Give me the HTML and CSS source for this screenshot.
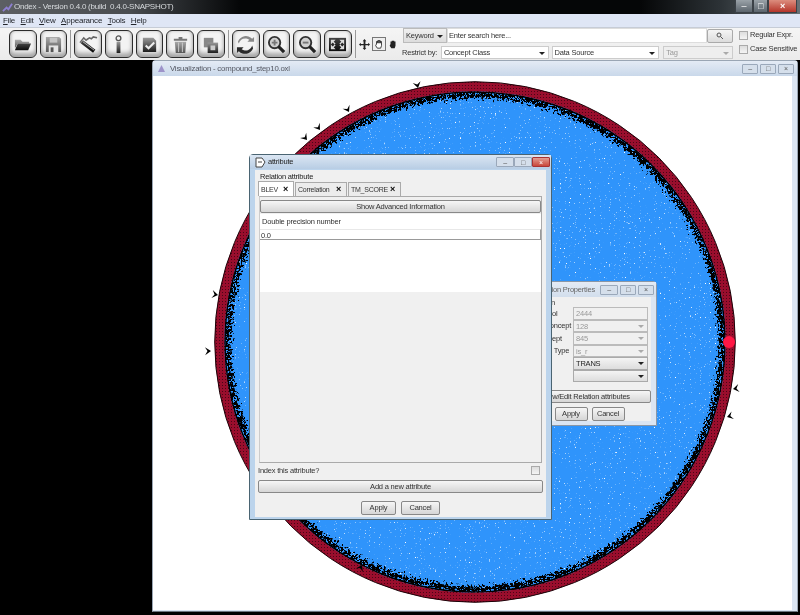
FILE: index.html
```html
<!DOCTYPE html>
<html lang="en">
<head>
<meta charset="utf-8">
<title>Ondex</title>
<link rel="stylesheet" href="styles.css">
</head>
<body>
<div class="app">
  <header class="titlebar">
    <svg class="app-icon" width="11" height="11" viewBox="0 0 12 12"><path d="M1 10 L5 6 L7 8 L11 2" fill="none" stroke="#8d7fd0" stroke-width="2"/></svg>
    <span class="title-text">Ondex - Version 0.4.0 (build  0.4.0-SNAPSHOT)</span>
    <div class="win-btns">
      <span class="win-btn">&#8211;</span><span class="win-btn win-max">&#9633;</span><span class="win-btn win-close">&#215;</span>
    </div>
  </header>
  <nav class="menubar">
    <span><u>F</u>ile</span><span><u>E</u>dit</span><span><u>V</u>iew</span><span><u>A</u>ppearance</span><span><u>T</u>ools</span><span><u>H</u>elp</span>
  </nav>
  <div class="toolbar">
    <div class="tools">
      <svg class="defs" width="0" height="0"><defs>
        <linearGradient id="ig" x1="0" y1="0" x2="0" y2="1"><stop offset="0" stop-color="#9a9a9a"/><stop offset="1" stop-color="#1c1c1c"/></linearGradient>
        <linearGradient id="ik" x1="0" y1="0" x2="0" y2="1"><stop offset="0" stop-color="#444"/><stop offset="1" stop-color="#0c0c0c"/></linearGradient>
        <linearGradient id="il" x1="0" y1="0" x2="0" y2="1"><stop offset="0" stop-color="#aaa"/><stop offset="1" stop-color="#555"/></linearGradient>
      </defs></svg>
      <button class="tool"><svg viewBox="0 0 20 20"><path d="M2 5h6l2 2h7v2H5L2 14z" fill="url(#il)"/><path d="M5 9h14l-3 7H2z" fill="url(#ik)"/></svg></button>
      <button class="tool"><svg viewBox="0 0 20 20"><path d="M2 2h14l2 2v14H2z" fill="url(#il)"/><path d="M6 3h8v5H6z" fill="#c4c4c4"/><path d="M5 11h10v7H5z" fill="#e4e4e4"/><path d="M7 13h3v5H7z" fill="#555"/></svg></button>
      <i class="sep"></i>
      <button class="tool"><svg viewBox="0 0 20 20"><path d="M3 7l13 10" stroke="url(#ik)" stroke-width="4"/><path d="M1 8l4-5 3 3M8 5l3-2 2 1 2-2 4 1" stroke="#666" stroke-width="1.600" fill="none"/><path d="M4 7l12 9" stroke="#ddd" stroke-width=".8"/></svg></button>
      <button class="tool"><svg viewBox="0 0 20 20"><circle cx="10" cy="3.500" r="2.500" fill="none" stroke="#555" stroke-width="1.400"/><path d="M8 7h4v12H8z" fill="url(#ig)"/></svg></button>
      <button class="tool"><svg viewBox="0 0 20 20"><path d="M3 3h11l3 3v12H3z" fill="url(#ig)"/><path d="M6 11l3 3 6-6" stroke="#eee" stroke-width="2.200" fill="none"/></svg></button>
      <button class="tool"><svg viewBox="0 0 20 20"><path d="M3 4h14v2H3zM8 2h4v2H8z" fill="#777"/><path d="M4 7h12l-1 12H5z" fill="url(#il)"/><path d="M8 8v10M12 8v10" stroke="#ccc"/></svg></button>
      <button class="tool"><svg viewBox="0 0 20 20"><path d="M3 3h10v10H3z" fill="#888"/><path d="M7 8h11v11H7z" fill="url(#ig)"/><path d="M10 11h5v5h-5z" fill="#ccc"/></svg></button>
      <i class="sep"></i>
      <button class="tool"><svg viewBox="0 0 20 20"><path d="M3 9a7 7 0 0 1 11-4l-2 2 7 0V2l-2 2A9 9 0 0 0 2 7z" fill="#888"/><path d="M17 11a7 7 0 0 1-11 4l2-2H1v6l2-2a9 9 0 0 0 15-3z" fill="#2a2a2a"/></svg></button>
      <button class="tool"><svg viewBox="0 0 20 20"><circle cx="8" cy="8" r="6" fill="#d0d0d0" stroke="#333" stroke-width="2"/><path d="M5 8h6M8 5v6" stroke="#777" stroke-width="2"/><path d="M12 12l6 6" stroke="#222" stroke-width="3.400"/></svg></button>
      <button class="tool"><svg viewBox="0 0 20 20"><circle cx="8" cy="8" r="6" fill="#d0d0d0" stroke="#333" stroke-width="2"/><path d="M5 8h6" stroke="#777" stroke-width="2"/><path d="M12 12l6 6" stroke="#222" stroke-width="3.400"/></svg></button>
      <button class="tool"><svg viewBox="0 0 20 20"><path d="M1 3h18v14H1z" fill="url(#ik)"/><path d="M3 5h5l-2 2 2 2-1 1-2-2-2 2zM17 5h-5l2 2-2 2 1 1 2-2 2 2zM3 15h5l-2-2 2-2-1-1-2 2-2-2zM17 15h-5l2-2-2-2 1-1 2 2 2-2z" fill="#ddd"/></svg></button>
      <i class="sep"></i>
      <div class="modes">
        <svg class="mode-move" viewBox="0 0 12 12"><path d="M6 0l2 2.400H7v3h3V4.200L12 6l-2 1.800V6.800H7v3h1L6 12 4 9.800h1v-3H2V8L0 6l2-1.800v1.300h3v-3H4z" fill="#222"/></svg>
        <span class="mode-on"><svg viewBox="0 0 12 12"><path d="M3 6V3h1.500v2V2h1.500v3V2h1.500v3V3H9v5l-1 3H4L2 8z" fill="#fff" stroke="#222"/></svg></span>
        <svg class="mode-hand" viewBox="0 0 12 12"><path d="M3 6V3h1.500v2V2h1.500v3V2h1.500v3V3H9v5l-1 3H4L2 8z" fill="#222"/></svg>
      </div>
    </div>
    <div class="search">
      <div class="search-row">
        <span class="drop keyword">Keyword<i class="arrow"></i></span>
        <span class="field query">Enter search here...</span>
        <button class="go"><svg width="8" height="8" viewBox="0 0 8 8"><circle cx="3" cy="3" r="2" fill="none" stroke="#555"/><path d="M4.500 4.500L7 7" stroke="#555"/></svg></button>
      </div>
      <div class="search-row">
        <span class="restrict">Restrict by:</span>
        <span class="drop concept">Concept Class<i class="arrow"></i></span>
        <span class="drop source">Data Source<i class="arrow"></i></span>
        <span class="drop tag">Tag<i class="arrow dim"></i></span>
      </div>
    </div>
    <div class="checks">
      <label class="check"><i class="box"></i>Regular Expr.</label>
      <label class="check"><i class="box"></i>Case Sensitive</label>
    </div>
  </div>
  <main class="desktop">
    <section class="viz">
      <div class="viz-title">
        <svg width="9" height="9" viewBox="0 0 9 9"><path d="M4.500 1L8 8H1z" fill="#9d93c9"/></svg>
        <span>Visualization - compound_step10.oxl</span>
        <div class="frame-btns"><span class="frame-btn">&#8211;</span><span class="frame-btn">&#9633;</span><span class="frame-btn">&#215;</span></div>
      </div>
      <div class="canvas">
        <svg class="graph" width="639" height="534" viewBox="0 0 639 534">
          <defs>
            <filter id="fuzz" x="-5%" y="-5%" width="110%" height="110%">
              <feTurbulence type="fractalNoise" baseFrequency="0.45" numOctaves="2" seed="4"/>
              <feDisplacementMap in="SourceGraphic" scale="16" xChannelSelector="R" yChannelSelector="G"/>
            </filter>
            <filter id="speck" x="0" y="0" width="100%" height="100%">
              <feTurbulence type="fractalNoise" baseFrequency="0.8" numOctaves="1" seed="9"/>
              <feColorMatrix values="0 0 0 0 1  0 0 0 0 1  0 0 0 0 1  9 0 0 0 -6.050"/>
            </filter>
            <clipPath id="disc"><circle cx="322" cy="266" r="252"/></clipPath>
            <pattern id="hatch" width="3" height="3" patternUnits="userSpaceOnUse">
              <rect width="3" height="3" fill="#9a0e2d"/>
              <rect width="1" height="1" fill="#4a0616"/>
            </pattern>
            <path id="mark" d="M0 0l-4-6 4 2.500 4-2.500z"/>
          </defs>
          <circle cx="322" cy="266" r="252" fill="#2f94fb"/>
          <rect x="70" y="14" width="504" height="504" filter="url(#speck)" clip-path="url(#disc)"/>
          <circle cx="322" cy="266" r="247" fill="none" stroke="#000" stroke-width="5" filter="url(#fuzz)"/>
          <circle cx="322" cy="266" r="250" fill="none" stroke="#000" stroke-width="1.500"/>
          <circle cx="322" cy="266" r="255.500" fill="none" stroke="url(#hatch)" stroke-width="9.500"/>
          <circle cx="322" cy="266" r="260.300" fill="none" stroke="#1a0207" stroke-width="1"/>
          <g fill="#000">
            <use href="#mark" transform="translate(196 36) rotate(-29)"/>
            <use href="#mark" transform="translate(167 54) rotate(-36)"/>
            <use href="#mark" transform="translate(154 64) rotate(-40)"/>
            <use href="#mark" transform="translate(265 12) rotate(-13)"/>
            <use href="#mark" transform="translate(65 219) rotate(-80)"/>
            <use href="#mark" transform="translate(58 275) rotate(-92)"/>
            <use href="#mark" transform="translate(580 313) rotate(80)"/>
            <use href="#mark" transform="translate(574 341) rotate(73)"/>
            <use href="#mark" transform="translate(403 498) rotate(161)"/>
            <use href="#mark" transform="translate(352 507) rotate(173)"/>
            <use href="#mark" transform="translate(209 489) rotate(-153)"/>
          </g>
          <circle cx="576" cy="266" r="6" fill="#ff1744"/>
        </svg>
      </div>
    </section>

    <section class="dialog props">
      <div class="dlg-title props-title">
        <span class="dlg-name">Relation Properties</span>
        <div class="frame-btns"><span class="frame-btn wide-btn">&#8211;</span><span class="frame-btn">&#9633;</span><span class="frame-btn">&#215;</span></div>
      </div>
      <div class="props-body">
        <div class="props-group">Relation</div>
        <div class="prop-row"><span>Id Symbol</span><span class="prop-val">2444</span></div>
        <div class="prop-row"><span>From Concept</span><span class="prop-val">128<i class="arrow dim"></i></span></div>
        <div class="prop-row"><span>To Concept</span><span class="prop-val">845<i class="arrow dim"></i></span></div>
        <div class="prop-row"><span>Relation Type</span><span class="prop-val">is_r<i class="arrow dim"></i></span></div>
        <div class="prop-row"><span>Attribute</span><span class="prop-val active">TRANS<i class="arrow"></i></span></div>
        <div class="prop-row"><span></span><span class="prop-val active">&nbsp;<i class="arrow"></i></span></div>
        <button class="btn wide props-wide">View/Edit Relation attributes</button>
        <div class="actions"><button class="btn act">Apply</button><button class="btn act">Cancel</button></div>
      </div>
    </section>

    <section class="dialog attr">
      <div class="dlg-title">
        <svg width="11" height="11" viewBox="0 0 11 11"><path d="M1 1h6l3 4-3 5H1z" fill="#fff" stroke="#444"/><path d="M3 5h4" stroke="#444"/></svg>
        <span class="dlg-name">attribute</span>
        <div class="win-mini"><span class="frame-btn wide-btn">&#8211;</span><span class="frame-btn wide-btn">&#9633;</span><span class="frame-btn wide-btn close">&#215;</span></div>
      </div>
      <div class="attr-body">
        <div class="group-label">Relation attribute</div>
        <div class="tabs">
          <span class="tab on">BLEV<b>&#215;</b></span>
          <span class="tab">Correlation<b>&#215;</b></span>
          <span class="tab">TM_SCORE<b>&#215;</b></span>
        </div>
        <div class="tab-panel">
          <button class="btn wide adv">Show Advanced Information</button>
          <div class="table">
            <div class="thead">Double precision number</div>
            <div class="tcell">0.0</div>
            <div class="tfill"></div>
            <div class="tempty"></div>
          </div>
        </div>
        <div class="index-row"><span>Index this attribute?</span><i class="box"></i></div>
        <button class="btn wide add">Add a new attribute</button>
        <div class="actions"><button class="btn act">Apply</button><button class="btn act">Cancel</button></div>
      </div>
    </section>
  </main>
</div>
</body>
</html>
```
FILE: styles.css
```css
* { box-sizing: border-box; }
html, body { margin: 0; padding: 0; }
body { width: 800px; height: 615px; overflow: hidden; background: #000; font: 7.500px/1 "Liberation Sans", Arial, sans-serif; letter-spacing: -0.2px; color: #222; }
.app { width: 800px; height: 615px; display: flex; flex-direction: column; filter: blur(0.35px); }
button { font: inherit; letter-spacing: inherit; color: inherit; padding: 0; }

.titlebar { height: 14px; flex: none; display: flex; align-items: center; padding-left: 2px; gap: 1px; background: linear-gradient(90deg, #5c5f63 0, #4a4d50 130px, #2a2d30 175px, #050607 240px, #050607 640px, #2c3236 720px, #6a7276 800px); color: #d8dbde; font-size: 8px; letter-spacing: -0.25px; }
.app-icon { flex: none; }
.title-text { white-space: pre; }
.win-btns { margin-left: auto; margin-right: 3px; display: flex; height: 13px; align-self: flex-start; }
.win-btn { width: 18px; display: flex; align-items: center; justify-content: center; color: #fff; font-size: 9px; background: linear-gradient(#9aa2a8, #5c656d); border: 1px solid #3b4147; border-top: 0; }
.win-max { width: 15px; }
.win-close { width: 29px; background: linear-gradient(#dc8d7e, #b5352a); font-weight: bold; }

.menubar { height: 13px; flex: none; display: flex; align-items: center; gap: 5.500px; padding-left: 3px; background: #dfe6f5; font-size: 8px; color: #23262c; }
.toolbar { height: 33px; flex: none; display: flex; background: linear-gradient(#f5f5f5, #ebebeb); border-top: 1px solid #c6ccd6; }
.tools { width: 401px; display: flex; align-items: center; padding-left: 9px; gap: 3px; }
.defs { position: absolute; }
.tool { width: 27.700px; height: 28px; flex: none; border: 1.500px solid #2c2c2c; border-radius: 6px; background: #f3f3f3; box-shadow: inset 0 -4px 4px #a8a8a8, inset 0 0 3px #bbb; display: flex; align-items: center; justify-content: center; }
.tool svg { width: 19px; height: 19px; }
.sep { width: 1px; height: 28px; background: #9a9a9a; flex: none; }
.modes { display: flex; align-items: center; gap: 2px; }
.mode-move { width: 11px; height: 11px; display: block; }
.mode-hand { width: 10px; height: 10px; display: block; }
.mode-on { width: 14px; height: 14px; display: flex; align-items: center; justify-content: center; border: 1px solid #777; background: #eee; }
.mode-on svg { width: 10px; height: 10px; display: block; }

.search { width: 332px; display: flex; flex-direction: column; gap: 2px; }
.search-row { display: flex; align-items: center; height: 15px; }
.drop { position: relative; display: flex; align-items: center; height: 13px; padding-left: 2px; background: #fff; border: 1px solid #ccc; color: #333; }
.keyword { width: 44px; height: 15px; background: linear-gradient(#f0f0f0, #ddd); border-color: #bbb; margin-left: 2px; }
.field { display: flex; align-items: center; }
.query { width: 260px; height: 15px; padding-left: 1px; background: #fff; border: 1px solid #ddd; color: #333; }
.go { width: 26px; height: 14px; display: flex; align-items: center; justify-content: center; border: 1px solid #aaa; border-radius: 2px; background: linear-gradient(#f5f5f5, #dcdcdc); }
.restrict { width: 39px; margin-left: 1px; color: #333; }
.concept { width: 108px; }
.source { width: 108px; margin-left: 3px; }
.tag { width: 70px; margin-left: 4px; color: #999; background: #eee; }
.arrow { position: absolute; right: 3px; top: 50%; margin-top: -1px; width: 0; height: 0; border: 3px solid transparent; border-top: 3px solid #222; border-bottom: 0; }
.arrow.dim { border-top-color: #aaa; }

.checks { flex: 1; display: flex; flex-direction: column; gap: 2px; padding: 1px 0 0 6px; }
.check { display: flex; align-items: center; gap: 2px; height: 12px; color: #333; white-space: nowrap; }
.box { width: 9px; height: 9px; flex: none; border: 1px solid #aaa; background: linear-gradient(#ddd, #f4f4f4); display: block; }

.desktop { flex: 1; position: relative; background: #000; overflow: hidden; }
.viz { position: absolute; left: 152px; top: 0; width: 646px; height: 552px; display: flex; flex-direction: column; background: #dbe5f2; border: 1px solid #9aa6b4; border-bottom-color: #6d7680; border-radius: 4px 4px 0 0; }
.viz-title { height: 15px; flex: none; display: flex; align-items: center; gap: 4px; padding: 0 3px 0 4px; color: #555862; background: linear-gradient(#e4ebf5, #c9d8ea); font-size: 7.800px; }
.frame-btns { margin-left: auto; display: flex; gap: 2px; }
.frame-btn { width: 16px; height: 10px; display: flex; align-items: center; justify-content: center; border: 1px solid #9aa8ba; border-radius: 1px; background: #d5dfeb; color: #555; font-size: 7px; line-height: 1; }
.canvas { flex: 1; margin: 0 5px 1px 0; background: #fff; overflow: hidden; }
.graph { display: block; }

.dialog { position: absolute; display: flex; flex-direction: column; border: 1px solid #4a6472; border-radius: 4px 4px 0 0; background: #bcd4ec; }
.dlg-title { height: 14px; flex: none; display: flex; align-items: center; gap: 2px; padding: 0 1px 0 5px; color: #222; background: linear-gradient(#dbe6f3, #b8cde4); }
.win-mini { margin-left: auto; display: flex; }
.wide-btn { width: 18px; }
.win-mini .close { background: linear-gradient(#e39c90, #c9473a); color: #fff; border-color: #a33; }
.dlg-name { white-space: nowrap; }

.attr { left: 249px; top: 94px; width: 303px; height: 366px; z-index: 2; }
.attr-body { flex: 1; margin: 1px 5px 2px; background: #f0f0f0; padding: 1px 3px 0; display: flex; flex-direction: column; }
.group-label { height: 10px; padding: 2px 0 0 2px; color: #222; }
.tabs { display: flex; gap: 1px; height: 15px; align-items: flex-end; }
.tab { display: flex; align-items: center; justify-content: space-between; height: 14px; padding: 0 5px 0 2px; background: #ececec; border: 1px solid #aaa; border-bottom: 0; color: #333; font-size: 7px; letter-spacing: -0.25px; }
.tab:nth-child(2) { width: 52px; }
.tab:nth-child(3) { width: 53px; }
.tab.on { height: 15px; background: #fff; width: 36px; }
.tab b { font-size: 9px; line-height: 1; color: #000; }
.tab-panel { height: 267px; display: flex; flex-direction: column; margin: 0 1px; border: 1px solid #aaa; border-left-color: #ccc; padding-top: 3px; }
.wide { display: block; width: 100%; flex: none; border: 1px solid #888; border-radius: 2px; background: linear-gradient(#f6f6f6, #d6d6d6); color: #333; text-align: center; }
.adv { height: 13px; }
.table { flex: 1; display: flex; flex-direction: column; margin-top: 1px; }
.thead { height: 15px; padding: 4px 0 0 2px; background: #fff; color: #333; }
.tcell { height: 11px; padding: 2px 0 0 1px; background: #fff; border-top: 1px solid #e8e8e8; border-bottom: 1px solid #999; border-right: 1px solid #999; color: #333; }
.tfill { height: 52px; background: #fff; }
.tempty { flex: 1; background: #f0f0f0; }
.index-row { display: flex; justify-content: space-between; align-items: center; flex: none; height: 15px; padding: 0 3px 0 0; color: #333; }
.add { height: 13px; margin-top: 2px; }
.actions { display: flex; justify-content: center; gap: 5px; margin-top: 8px; }
.act { width: 35px; height: 14px; border: 1px solid #888; border-radius: 2px; background: linear-gradient(#f6f6f6, #d6d6d6); color: #333; }
.act + .act { width: 39px; }

.props { left: 515px; top: 221px; width: 142px; height: 145px; z-index: 1; border-color: #8a96a5; background: #dbe5f2; }
.props-title { height: 15px; padding: 0 2px 0 19px; color: #666; background: linear-gradient(#e4ebf5, #d2deec); }
.props-body { flex: 1; background: #f0f0f0; margin: 0 5px 4px; display: flex; flex-direction: column; }
.props-group { height: 10px; flex: none; padding: 2px 0 0 8px; color: #333; }
.prop-row { display: flex; justify-content: space-between; align-items: center; flex: none; height: 12.500px; padding: 0 3px 0 5px; color: #333; white-space: nowrap; }
.prop-val { position: relative; width: 75px; height: 12.500px; flex: none; border: 1px solid #bbb; background: #f0f0f0; color: #999; padding: 2px 0 0 2px; }
.prop-val.active { background: linear-gradient(#f4f4f4, #ddd); color: #222; border-color: #aaa; }
.props-wide { height: 13px; margin-top: 8px; }
.props .actions { margin: 4px 0 0 7px; gap: 4px; }
.props .act { width: 33px; }
```
